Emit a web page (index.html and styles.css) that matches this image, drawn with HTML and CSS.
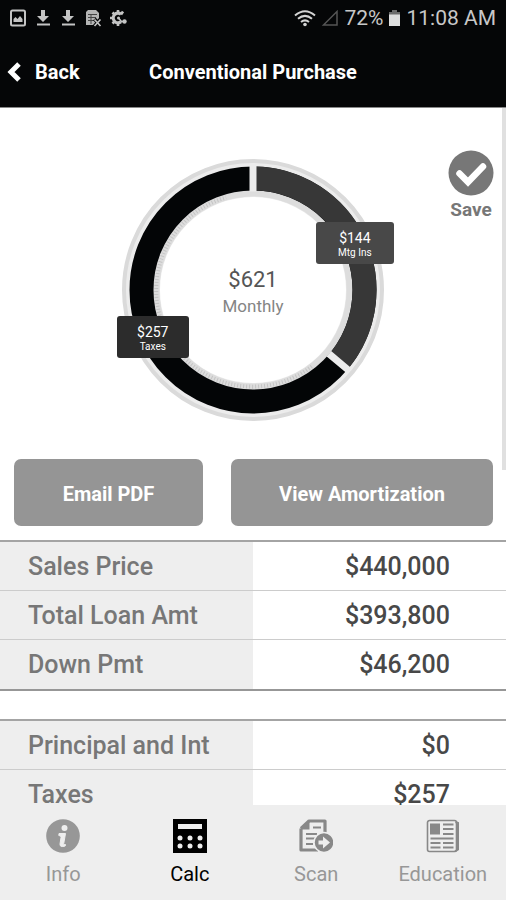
FILE: index.html
```html
<!DOCTYPE html>
<html lang="en">
<head>
  <meta charset="UTF-8" />
  <meta name="viewport" content="width=device-width, initial-scale=1.0"/>
  <title>Conventional Purchase</title>
  <link rel="stylesheet" href="styles.css">
</head>
<body>
  <header class="header">
    <div class="status-bar">
      <div class="status-icons">
        <svg width="18" height="18" viewBox="0 0 18 18"><rect x="2" y="1.500" width="14" height="15" rx="1.500" fill="none" stroke="#c4c4c4" stroke-width="2"/><path d="M4.500 13V10l2-2 2 2 2.500-3 2.500 3v3z" fill="#c4c4c4"/></svg>
        <svg width="18" height="18" viewBox="0 0 18 18"><path d="M7 1h4v6h4l-6 6-6-6h4zM3 14.500h13v2H3z" fill="#c4c4c4"/></svg>
        <svg width="18" height="18" viewBox="0 0 18 18"><path d="M7 1h4v6h4l-6 6-6-6h4zM3 14.500h13v2H3z" fill="#c4c4c4"/></svg>
        <svg width="18" height="18" viewBox="0 0 18 18"><path d="M4 1h8l3 3v7l-3 5H2V3z" fill="#b4b4b4"/><path d="M4 5.500h9M4 8.500h8M4 11.500h6M7 5v10" stroke="#444" stroke-width="1"/><path d="M10.500 10l6 7M16.500 10l-6 7" stroke="#050607" stroke-width="3.500"/><path d="M10.500 10.500l6 6.500M16.500 10.500l-6 6.500" stroke="#c4c4c4" stroke-width="1.600"/></svg>
        <svg width="18" height="18" viewBox="0 0 18 18"><path d="M12 5.200A4.800 4.800 0 1 0 12 12.800" fill="none" stroke="#c4c4c4" stroke-width="3.200"/><path d="M9 1v3M3.500 3.500l2 2M14 2.500l-2 3M1 9h3M3.500 14.500l2-2M9 17v-3" stroke="#c4c4c4" stroke-width="2.600"/><circle cx="9.500" cy="9" r="1.500" fill="#c4c4c4"/><path d="M9.500 9l3 3.500h3" fill="none" stroke="#c4c4c4" stroke-width="1.500"/><circle cx="15.500" cy="12.500" r="2.200" fill="#c4c4c4"/></svg>
      </div>
      <div class="status-info">
        <svg width="22" height="18" viewBox="0 0 22 18"><path d="M1 6.500Q11-2 21 6.500M4 9.800Q11 4 18 9.800M7 13Q11 9.800 15 13" fill="none" stroke="#d4d4d4" stroke-width="2"/><circle cx="11" cy="15.500" r="1.800" fill="#d4d4d4"/></svg>
        <svg width="18" height="18" viewBox="0 0 18 18"><path d="M2.500 16L16 2.500V16z" fill="none" stroke="#555" stroke-width="1.500"/></svg>
        <span>72%</span>
        <svg width="13" height="18" viewBox="0 0 13 18"><path d="M4 1h5v2H4zM1 3h11v3H1z" fill="#6c6c6c"/><path d="M1 5.500h11V17H1z" fill="#dedede"/></svg>
        <span class="clock">11:08 AM</span>
      </div>
    </div>
    <div class="title-bar">
      <a href="#" class="back">
        <svg width="15" height="20" viewBox="0 0 15 20"><path d="M13 2L5 10l8 8" fill="none" stroke="#fff" stroke-width="5"/></svg>
        Back
      </a>
      <h1>Conventional Purchase</h1>
    </div>
  </header>

  <main class="content">
    <div class="scrollbar"></div>

    <section class="summary">
      <div class="donut">
        <svg viewBox="0 0 262 262">
          <!-- outer and inner tracks -->
          <circle cx="131" cy="131" r="111" fill="none" stroke="#ececec" stroke-width="36"/>
          <circle cx="131" cy="131" r="129" fill="none" stroke="#dadada" stroke-width="4"/>
          <circle cx="131" cy="131" r="96.500" fill="none" stroke="#ddd" stroke-width="6"/>
          <path d="M189.700 207.500A96.500 96.500 0 1 1 104 38.400" fill="none" stroke="#c4c4c4" stroke-width="4" stroke-dasharray="1 2"/>
          <!-- segments -->
          <circle cx="131" cy="131" r="111.500" fill="none" stroke="#030506" stroke-width="24"/>
          <path d="M131 19.500A111.500 111.500 0 0 1 216.400 202.700" fill="none" stroke="#373737" stroke-width="24"/>
          <path d="M131 6.500v26M206.900 194.700l19.500 16.400" stroke="#ececec" stroke-width="7"/>
        </svg>
        <div class="donut-label">
          <span class="amount">$621</span>
          <span class="period">Monthly</span>
        </div>
        <div class="callout mtg"><strong>$144</strong><small>Mtg Ins</small></div>
        <div class="callout taxes"><strong>$257</strong><small>Taxes</small></div>
      </div>
      <button class="save">
        <svg width="46" height="46" viewBox="0 0 46 46"><circle cx="23" cy="23" r="22.500" fill="#777"/><path d="M11.500 23.500l8.500 8.500L35 16.500" fill="none" stroke="#fff" stroke-width="6.500" stroke-linecap="round"/></svg>
        Save
      </button>
    </section>

    <div class="actions">
      <button class="email">Email PDF</button>
      <button class="amortization">View Amortization</button>
    </div>

    <table class="figures">
      <tr><th scope="row">Sales Price</th><td>$440,000</td></tr>
      <tr><th scope="row">Total Loan Amt</th><td>$393,800</td></tr>
      <tr><th scope="row">Down Pmt</th><td>$46,200</td></tr>
    </table>

    <table class="figures">
      <tr><th scope="row">Principal and Int</th><td>$0</td></tr>
      <tr><th scope="row">Taxes</th><td>$257</td></tr>
    </table>
  </main>

  <nav class="tabs">
    <a href="#">
      <svg width="34" height="34" viewBox="0 0 34 34"><circle cx="17" cy="17" r="16.800" fill="#979797"/><circle cx="18.500" cy="9" r="3" fill="#eee"/><path d="M13 14.500h6.500l-1.800 10.300q-.2 1.300 1.800.7l-.3 1.500q-5.500 1.800-5.200-2l1-6.500q.3-2-2.200-2z" fill="#eee" stroke="#eee"/></svg>
      Info
    </a>
    <a href="#" class="active">
      <svg width="34" height="34" viewBox="0 0 34 34"><rect width="34" height="34" fill="#000"/><path d="M5 5h24v5H5z" fill="#eee"/><g fill="#eee"><circle cx="7" cy="19" r="2.500"/><circle cx="17" cy="19" r="2.500"/><circle cx="27" cy="19" r="2.500"/><circle cx="7" cy="27" r="2.500"/><circle cx="17" cy="27" r="2.500"/><circle cx="27" cy="27" r="2.500"/></g></svg>
      Calc
    </a>
    <a href="#">
      <svg width="34" height="34" viewBox="0 0 34 34"><path d="M2 9.500L10 2h16v13M2 9.500V31h17" fill="none" stroke="#888" stroke-width="3.200" stroke-linejoin="round"/><path d="M1 10.500L10.500 1v9.500z" fill="#888"/><path d="M14 8.500h8M7 15h11M7 19.500h9M7 25h7" stroke="#888" stroke-width="2"/><circle cx="25" cy="23.500" r="10" fill="#888" stroke="#eee" stroke-width="1.500"/><path d="M19.500 21.500h4.500v-4l7 6-7 6v-4h-4.500z" fill="#eee"/></svg>
      Scan
    </a>
    <a href="#">
      <svg width="34" height="34" viewBox="0 0 34 34"><path d="M3.500 1.500h25a2 2 0 0 1 2 2v27a2 2 0 0 1-2 2h-25a2 2 0 0 1-2-2v-27a2 2 0 0 1 2-2z" fill="none" stroke="#888" stroke-width="1.600"/><path d="M29.500 3l2.500 1v26.500l-3 2" fill="none" stroke="#888" stroke-width="2"/><path d="M4 4.500h10v11H4z" fill="#888"/><path d="M17 5.500h10.500M17 10h10.500M17 15h10.500M4.500 19.500h23M4.500 24h10M17 24h10.500M4.500 28.500h10M17 28.500h10.500" stroke="#888" stroke-width="1.800"/></svg>
      Education
    </a>
  </nav>
</body>
</html>
```
FILE: styles.css
```css
* {
  box-sizing: border-box;
}

body {
  margin: 0;
  height: 100vh;
  display: flex;
  flex-direction: column;
  font-family: Roboto, sans-serif;
  background: white;
}

button {
  padding: 0;
  font-family: inherit;
  border: none;
  cursor: pointer;
}

a {
  text-decoration: none;
}

svg {
  display: block;
}

.header {
  background: #050607;
  color: white;
  border-bottom: 1px solid #888;
}

.status-bar {
  display: flex;
  justify-content: space-between;
  align-items: center;
  height: 36px;
  padding: 0 10px 0 9px;
  color: #c8c8c8;
  font-size: 21px;
}

.status-icons {
  display: flex;
  gap: 7px;
}

.status-info {
  display: flex;
  align-items: center;
  gap: 5px;
}

.title-bar {
  display: grid;
  grid-template-columns: 1fr auto 1fr;
  align-items: center;
  height: 71px;
  padding: 0 6px;
}

.back {
  display: flex;
  align-items: center;
  gap: 14px;
  color: white;
  font-size: 20px;
  font-weight: bold;
}

h1 {
  margin: 0;
  font-size: 20px;
}

.content {
  flex: 1;
  min-height: 0;
  overflow: hidden;
  position: relative;
}

.scrollbar {
  position: absolute;
  top: 0;
  right: 0;
  width: 4px;
  height: 52%;
  background: #e0e0e0;
}

.summary {
  display: grid;
  grid-template-columns: 1fr auto 1fr;
  padding: 40px 12px 38px;
}

.donut {
  grid-column: 2;
  position: relative;
  width: 262px;
  margin-top: 11px;
}

.donut-label {
  position: absolute;
  inset: 0;
  display: flex;
  flex-direction: column;
  align-items: center;
  justify-content: center;
  padding-top: 4px;
}

.amount {
  color: #555;
  font-size: 22px;
  line-height: 28px;
}

.period {
  color: #858585;
  font-size: 17px;
  line-height: 24px;
}

.callout {
  position: absolute;
  display: flex;
  flex-direction: column;
  align-items: center;
  justify-content: center;
  height: 42px;
  padding-top: 4px;
  border-radius: 3px;
  color: white;
}

.callout strong {
  font-size: 14px;
  line-height: 16px;
  font-weight: normal;
}

.callout small {
  font-size: 10px;
  line-height: 14px;
}

.mtg {
  top: 24%;
  left: 74%;
  width: 78px;
  background: #484848;
}

.taxes {
  top: 60%;
  left: -2%;
  width: 72px;
  background: #2c2c2c;
}

.save {
  display: flex;
  flex-direction: column;
  align-items: center;
  justify-self: end;
  align-self: start;
  gap: 2px;
  padding-top: 2px;
  background: none;
  color: #777;
  font-size: 19px;
  font-weight: bold;
}

.actions {
  display: flex;
  gap: 28px;
  padding: 0 13px 14px 14px;
}

.actions button {
  height: 67px;
  padding-top: 2px;
  border-radius: 7px;
  background: #959595;
  color: white;
  font-size: 20px;
  font-weight: bold;
}

.email {
  flex: 189;
}

.amortization {
  flex: 262;
}

.figures {
  width: 100%;
  margin-bottom: 28px;
  border-spacing: 0;
  border-top: 2px solid #a4a4a4;
  border-bottom: 2px solid #979797;
  font-size: 25px;
}

.figures th,
.figures td {
  width: 50%;
  height: 49px;
  padding: 0;
  border-bottom: 1px solid #ccc;
  font-weight: 500;
}

.figures tr:last-child > * {
  border-bottom: none;
}

.figures th {
  padding-left: 28px;
  background: #eee;
  color: #777;
  text-align: left;
}

.figures td {
  padding-right: 56px;
  color: #484848;
  text-align: right;
}

.tabs {
  display: grid;
  grid-template-columns: repeat(4, 1fr);
  height: 95px;
  padding-top: 14px;
  background: #eee;
}

.tabs a {
  display: flex;
  flex-direction: column;
  align-items: center;
  gap: 8px;
  color: #979797;
  font-size: 20px;
  line-height: 26px;
}

.tabs .active {
  color: black;
}
```
